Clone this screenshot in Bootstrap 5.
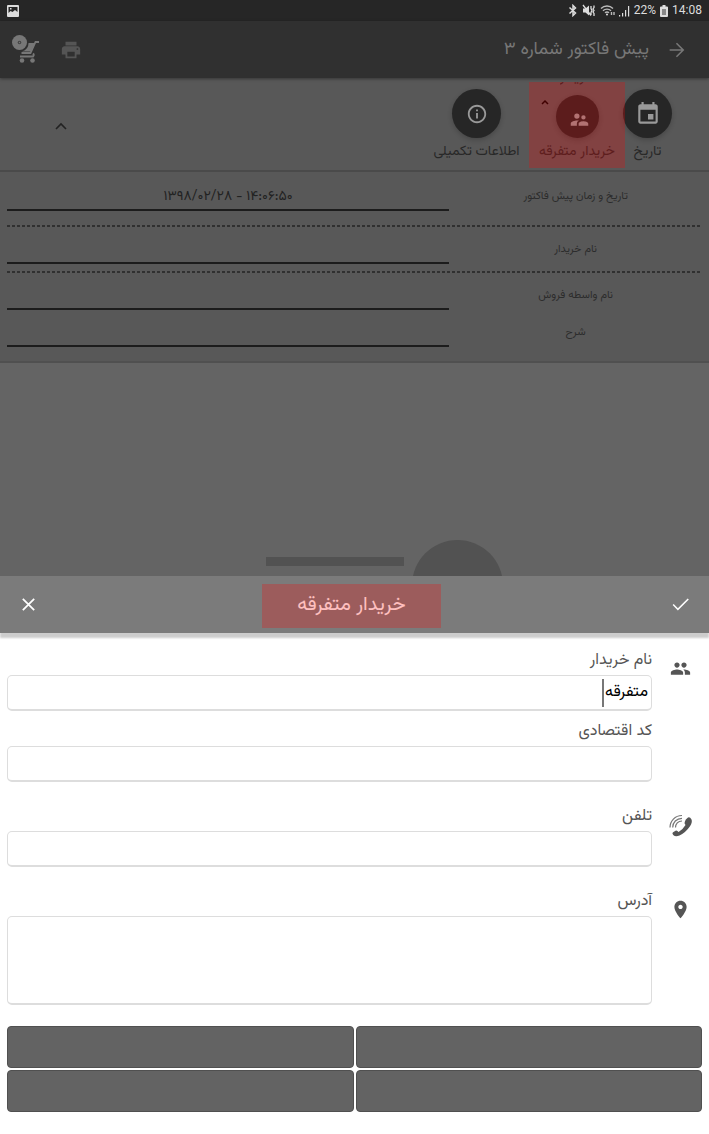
<!DOCTYPE html>
<html lang="fa" dir="rtl">
<head>
<meta charset="utf-8">
<meta name="viewport" content="width=device-width, initial-scale=1">
<title>پیش فاکتور شماره ۳</title>
<link href="https://cdn.jsdelivr.net/npm/bootstrap@5.3.0/dist/css/bootstrap.min.css" rel="stylesheet">
<style>
body{font-family:"Vazirmatn","DejaVu Sans",sans-serif;background:#fff;color:#222;line-height:20px}
svg{display:block;fill:currentColor}
button{color:inherit}
.plain{border:0;background:none;padding:0}
.push-left{margin-right:auto}
.status{height:21px;background:#262626;color:#ddd;font:12px/21px Roboto,sans-serif;padding:0 7px}
.topbar{height:57px;background:#303030;color:#777;padding:0 21px 0 12px;box-shadow:0 1px 3px #0006}
.topbar h1{font-size:18px;line-height:24px;margin:0 17px 0 0}
.tabs{height:94px;background:#585858;padding:4px 37px 0 55px;border-bottom:2px solid #4a4a4a}
.tab{font-size:14px;color:#282828}
.tab-date{width:49px}
.tab-info{width:89px;margin-right:8px}
.tab-text{line-height:24px;margin-top:2px;white-space:nowrap}
.disc{width:49px;height:49px;margin-top:7px;background:#262626;color:#999;box-shadow:0 2px 5px #0003}
.disc-sm{width:43px;height:43px;margin-top:8px;padding:5px 0 0 5px}
.buyer{width:96px;height:86px;margin-right:-2px}
.buyer::after,.sheet-title::after{content:"";position:absolute;inset:0;background:rgba(255,0,0,.25)}
.buyer-clip{height:6px;overflow:hidden}
.buyer-clip + svg + .disc{margin-top:7px}
.buyer-chev{top:17px;left:12px}
.details{background:#585858;padding:13px 7px 14px;border-bottom:2px solid #505050}
.details label{flex:4;font-size:11px;color:#2c2c2c;text-align:center;line-height:24px}
.line{flex:7;min-width:0;border:0;border-bottom:2px solid #1c1c1c;background:none;text-align:center;font-size:14px;height:26px;color:#222;padding:0;border-radius:0}
.r1{padding-bottom:14px}
.r2{padding:11px 0 7px}
.r3{padding-top:11px;padding-bottom:11px}
.dash{height:2px;background:repeating-linear-gradient(90deg,#303030 0 3px,transparent 3px 5px)}
.backdrop{background:#646464;padding-right:29%;min-height:120px}
.fab{width:91px;height:36px}
.fab i{display:block;width:91px;height:91px;background:#525252}
.fab-hint{width:138px;height:9px;background:#525252;margin:0 8px 10px}
.sheet-head{height:57px;background:#7b7b7b;color:#fff;padding:0 18px;box-shadow:0 5px 2px #ccc}
.sheet-title{width:179px;height:44px;margin:2px 6px 0 0;font-size:20px;line-height:42px}
.sheet-body{padding:14px 0 22px 7px}
.group-icon{width:57px;color:#555;padding-top:11px}
.group-icon svg{margin:auto}
.group + .group{margin-top:21px}
.group label{font-size:16px;line-height:28px;color:#555}
.group .label-next{margin-top:7px}
.box{height:36px;border:1px solid #ddd;border-bottom-width:2px;border-radius:5px;padding:0 3px;font-size:16px;color:#000}
.box-lg{height:89px;resize:none}
.caret{right:48px;top:4px;width:2px;height:28px;background:#777}
.actions{display:grid;grid-template-columns:1fr 1fr;gap:2px;margin:21px 0 0;padding-right:7px}
.actions button{height:42px;background:#636363;border:1px solid #505050;border-radius:4px}
</style>
</head>
<body>
<div class="d-flex flex-column min-vh-100">
  <div class="status d-flex align-items-center justify-content-between" dir="ltr">
    <svg width="12" height="12" viewBox="0 0 12 12"><path fill-rule="evenodd" d="M1 0h10a1 1 0 0 1 1 1v10a1 1 0 0 1-1 1H1a1 1 0 0 1-1-1V1a1 1 0 0 1 1-1zM1.500 2v6l2-2 2 1 2.500-2 2.500 2V2zM3 3h1.500v1.500H3z"/></svg>
    <div class="d-flex align-items-center gap-1">
      <svg width="10" height="13" viewBox="0 0 10 13"><path fill="none" stroke="#ddd" stroke-width="1.500" d="M1.500 3.500l6 5.500L5 11.500v-10L7.500 4l-6 5.500"/></svg>
      <svg width="14" height="13" viewBox="0 0 14 13"><path d="M1 4.500h2.500L7 1.500v10L3.500 8.500H1z"/><path d="M1 1l8 10.500M9 2v2.500L10 6.500 9 8.500V11M12 1.500v2l-1 1.500 1 1.500-1 1.500 1 1.500V12" stroke="#ddd" stroke-width="1.300" fill="none"/></svg>
      <svg width="15" height="13" viewBox="0 0 15 13"><path d="M1 4.500a8.500 8.500 0 0 1 12 0M3 6.700a5.800 5.800 0 0 1 8 0M5 8.800a3 3 0 0 1 4 0M11.500 8v3M14 8v3" stroke="#bbb" stroke-width="1.400" fill="none"/><circle cx="7" cy="10.500" r="1"/></svg>
      <svg width="11" height="12" viewBox="0 0 11 12"><path d="M0 10h1.200v1.500H0zM3 8h1.200v3.500H3zM6 5h1.200v6.500H6zM9 1h1.200v10.500H9z"/></svg>
      <span>22%</span>
      <svg width="8" height="12" viewBox="0 0 8 12"><path fill-rule="evenodd" d="M2.500 0h3v1.500H7a1 1 0 0 1 1 1V11a1 1 0 0 1-1 1H1a1 1 0 0 1-1-1V2.500a1 1 0 0 1 1-1h1.500z"/><path fill="#888" d="M2 4h4v6H2z"/></svg>
      <span>14:08</span>
    </div>
  </div>

  <header class="topbar d-flex align-items-center position-relative">
    <button class="plain" type="button" aria-label="بازگشت"><svg width="22" height="22" viewBox="0 0 24 24"><path d="M12 4l-1.200 1.200 6 6H4v1.600h12.800l-6 6L12 20l8-8z"/></svg></button>
    <h1 class="fw-normal">پیش فاکتور شماره ۳</h1>
    <div class="push-left d-flex align-items-center gap-3">
      <button class="plain" type="button" aria-label="چاپ"><svg width="22" height="22" viewBox="0 0 24 24"><path fill="#555" d="M19 8H5c-1.660 0-3 1.340-3 3v6h4v4h12v-4h4v-6c0-1.660-1.340-3-3-3zm-3 11H8v-5h8v5zm3-7c-.55 0-1-.45-1-1s.45-1 1-1 1 .45 1 1-.45 1-1 1zm-1-9H6v4h12V3z"/></svg></button>
      <button class="plain" type="button" aria-label="سبد خرید"><svg width="32" height="32" viewBox="0 0 32 32"><g fill="#777"><circle cx="7.500" cy="8.500" r="7.500"/><circle cx="10" cy="26.500" r="2.300"/><circle cx="20.500" cy="26.500" r="2.300"/><path d="M16.500 9H23l-3.500 8.500H10q6.500-2 6.500-8.500z"/></g><path d="M27 8h-3.500l-5 11H9.500M8 22.500h13q1.500-1.500 0-3" fill="none" stroke="#777" stroke-width="1.800"/><circle cx="7.500" cy="8.500" r="1.800" fill="#444"/><circle cx="7.500" cy="8.500" r=".7" fill="#777"/></svg></button>
    </div>
  </header>

  <nav class="tabs d-flex align-items-start">
    <button class="plain tab tab-date d-flex flex-column align-items-center" type="button">
      <span class="disc rounded-circle d-flex align-items-center justify-content-center"><svg width="26" height="26" viewBox="0 0 24 24"><path d="M17 12h-5v5h5v-5zM16 1v2H8V1H6v2H5c-1.110 0-1.990.9-1.990 2L3 19c0 1.100.89 2 2 2h14c1.100 0 2-.9 2-2V5c0-1.100-.9-2-2-2h-1V1h-2zm3 18H5V8h14v11z"/></svg></span>
      <span class="tab-text">تاریخ</span>
    </button>
    <button class="plain tab buyer position-relative d-flex flex-column align-items-center" type="button">
      <span class="buyer-clip d-flex align-items-end">خریدار</span>
      <svg class="buyer-chev position-absolute" width="8" height="6" viewBox="0 0 8 6"><path d="M1 5l3-3 3 3" fill="none" stroke="#000" stroke-width="1.500"/></svg>
      <span class="disc disc-sm rounded-circle d-flex align-items-center justify-content-center"><svg width="21" height="21" viewBox="0 0 24 24"><path d="M16.500 12a2.500 2.500 0 1 0 0-5 2.500 2.500 0 0 0 0 5zM9 11a3 3 0 1 0 0-6 3 3 0 0 0 0 6zm7.500 3c-1.830 0-5.500.92-5.500 2.750V19h11v-2.250c0-1.830-3.670-2.750-5.500-2.750zM9 13c-2.330 0-7 1.170-7 3.500V19h7v-2.250c0-.85.330-2.340 2.370-3.470C10.500 13.100 9.660 13 9 13z"/></svg></span>
      <span class="tab-text">خریدار متفرقه</span>
    </button>
    <button class="plain tab tab-info d-flex flex-column align-items-center" type="button">
      <span class="disc rounded-circle d-flex align-items-center justify-content-center"><svg width="22" height="22" viewBox="0 0 24 24"><path d="M11 17h2v-6h-2v6zm1-15C6.480 2 2 6.480 2 12s4.480 10 10 10 10-4.480 10-10S17.520 2 12 2zm0 18c-4.410 0-8-3.590-8-8s3.590-8 8-8 8 3.590 8 8-3.590 8-8 8zM11 9h2V7h-2v2z"/></svg></span>
      <span class="tab-text">اطلاعات تکمیلی</span>
    </button>
    <button class="plain push-left align-self-center" type="button" aria-label="بستن"><svg width="12" height="8" viewBox="0 0 12 8"><path d="M1 7l5-5 5 5" fill="none" stroke="#222" stroke-width="1.600"/></svg></button>
  </nav>

  <section class="details">
    <div class="r1 d-flex"><label for="f1">تاریخ و زمان پیش فاکتور</label><input id="f1" class="line" dir="ltr" readonly value="۱۳۹۸/۰۲/۲۸ - ۱۴:۰۶:۵۰"></div>
    <div class="dash"></div>
    <div class="r2 d-flex"><label for="f2">نام خریدار</label><input id="f2" class="line" readonly></div>
    <div class="dash"></div>
    <div class="r3 d-flex"><label for="f3">نام واسطه فروش</label><input id="f3" class="line" readonly></div>
    <div class="d-flex"><label for="f4">شرح</label><input id="f4" class="line" readonly></div>
  </section>

  <div class="backdrop flex-grow-1 d-flex align-items-end">
    <div class="fab overflow-hidden"><i class="rounded-circle"></i></div>
    <div class="fab-hint"></div>
  </div>

  <section>
    <header class="sheet-head d-flex align-items-center justify-content-between position-relative">
      <button class="plain" type="button" aria-label="تایید"><svg width="21" height="21" viewBox="0 0 24 24"><path d="M9 16.200L4.200 11.400 3 12.600 9 18.800 21.500 6.300 20.200 5z"/></svg></button>
      <h2 class="sheet-title position-relative text-center fw-normal">خریدار متفرقه</h2>
      <button class="plain" type="button" aria-label="لغو"><svg width="21" height="21" viewBox="0 0 24 24"><path d="M5.500 5.500l13 13m0-13l-13 13" fill="none" stroke="#fff" stroke-width="2"/></svg></button>
    </header>
    <form class="sheet-body">
      <div class="group d-flex">
        <div class="group-icon"><svg width="21" height="21" viewBox="0 0 24 24"><path d="M16 11c1.660 0 2.990-1.340 2.990-3S17.660 5 16 5s-3 1.340-3 3 1.340 3 3 3zm-8 0c1.660 0 2.990-1.340 2.990-3S9.660 5 8 5 5 6.340 5 8s1.340 3 3 3zm0 2c-2.330 0-7 1.170-7 3.500V19h14v-2.500c0-2.330-4.670-3.500-7-3.500zm8 0c-.29 0-.62.020-.97.050C16.190 13.890 17 15.020 17 16.500V19h6v-2.500c0-2.330-4.670-3.500-7-3.500z"/></svg></div>
        <div class="flex-grow-1">
          <label class="d-block" for="g1">نام خریدار</label>
          <div class="position-relative"><input id="g1" class="box w-100 d-block" value="متفرقه"><span class="caret position-absolute"></span></div>
          <label class="label-next d-block" for="g2">کد اقتصادی</label>
          <input id="g2" class="box w-100 d-block">
        </div>
      </div>
      <div class="group d-flex">
        <div class="group-icon"><svg width="24" height="24" viewBox="0 0 24 24"><path d="M16.800 5.500l2.200-2q1.200-.7 2.200.3l1.200 1.500q1.400 2.700-1.400 7-4.500 6.500-10.500 9.200-4 1.500-6-.3l-.9-1.200q-.5-1 .5-1.800l2.400-1.500q1-.6 1.900.2l1.200 1q4.500-2.600 6.900-6.900l-.9-1.600q-.3-.9 1.200-3.900z"/><path d="M1 13.500C1 7 6 1.500 13 1.500M3.700 13.500C3.700 8.500 7.500 4.300 13 4.300M6.500 13.500C6.500 10 9 7 13 7" fill="none" stroke="#777" stroke-width="1.200"/></svg></div>
        <div class="flex-grow-1">
          <label class="d-block" for="g3">تلفن</label>
          <input id="g3" class="box w-100 d-block" type="tel">
        </div>
      </div>
      <div class="group d-flex">
        <div class="group-icon"><svg width="21" height="21" viewBox="0 0 24 24"><path d="M12 2C8.130 2 5 5.130 5 9c0 5.250 7 13 7 13s7-7.750 7-13c0-3.870-3.130-7-7-7zm0 9.500c-1.380 0-2.500-1.120-2.500-2.500s1.120-2.500 2.500-2.500 2.500 1.120 2.500 2.500-1.120 2.500-2.500 2.500z"/></svg></div>
        <div class="flex-grow-1">
          <label class="d-block" for="g4">آدرس</label>
          <textarea id="g4" class="box box-lg w-100 d-block"></textarea>
        </div>
      </div>
      <div class="actions">
        <button type="button"></button><button type="button"></button>
        <button type="button"></button><button type="button"></button>
      </div>
    </form>
  </section>
</div>
<script src="https://cdn.jsdelivr.net/npm/bootstrap@5.3.0/dist/js/bootstrap.bundle.min.js"></script>
</body>
</html>
